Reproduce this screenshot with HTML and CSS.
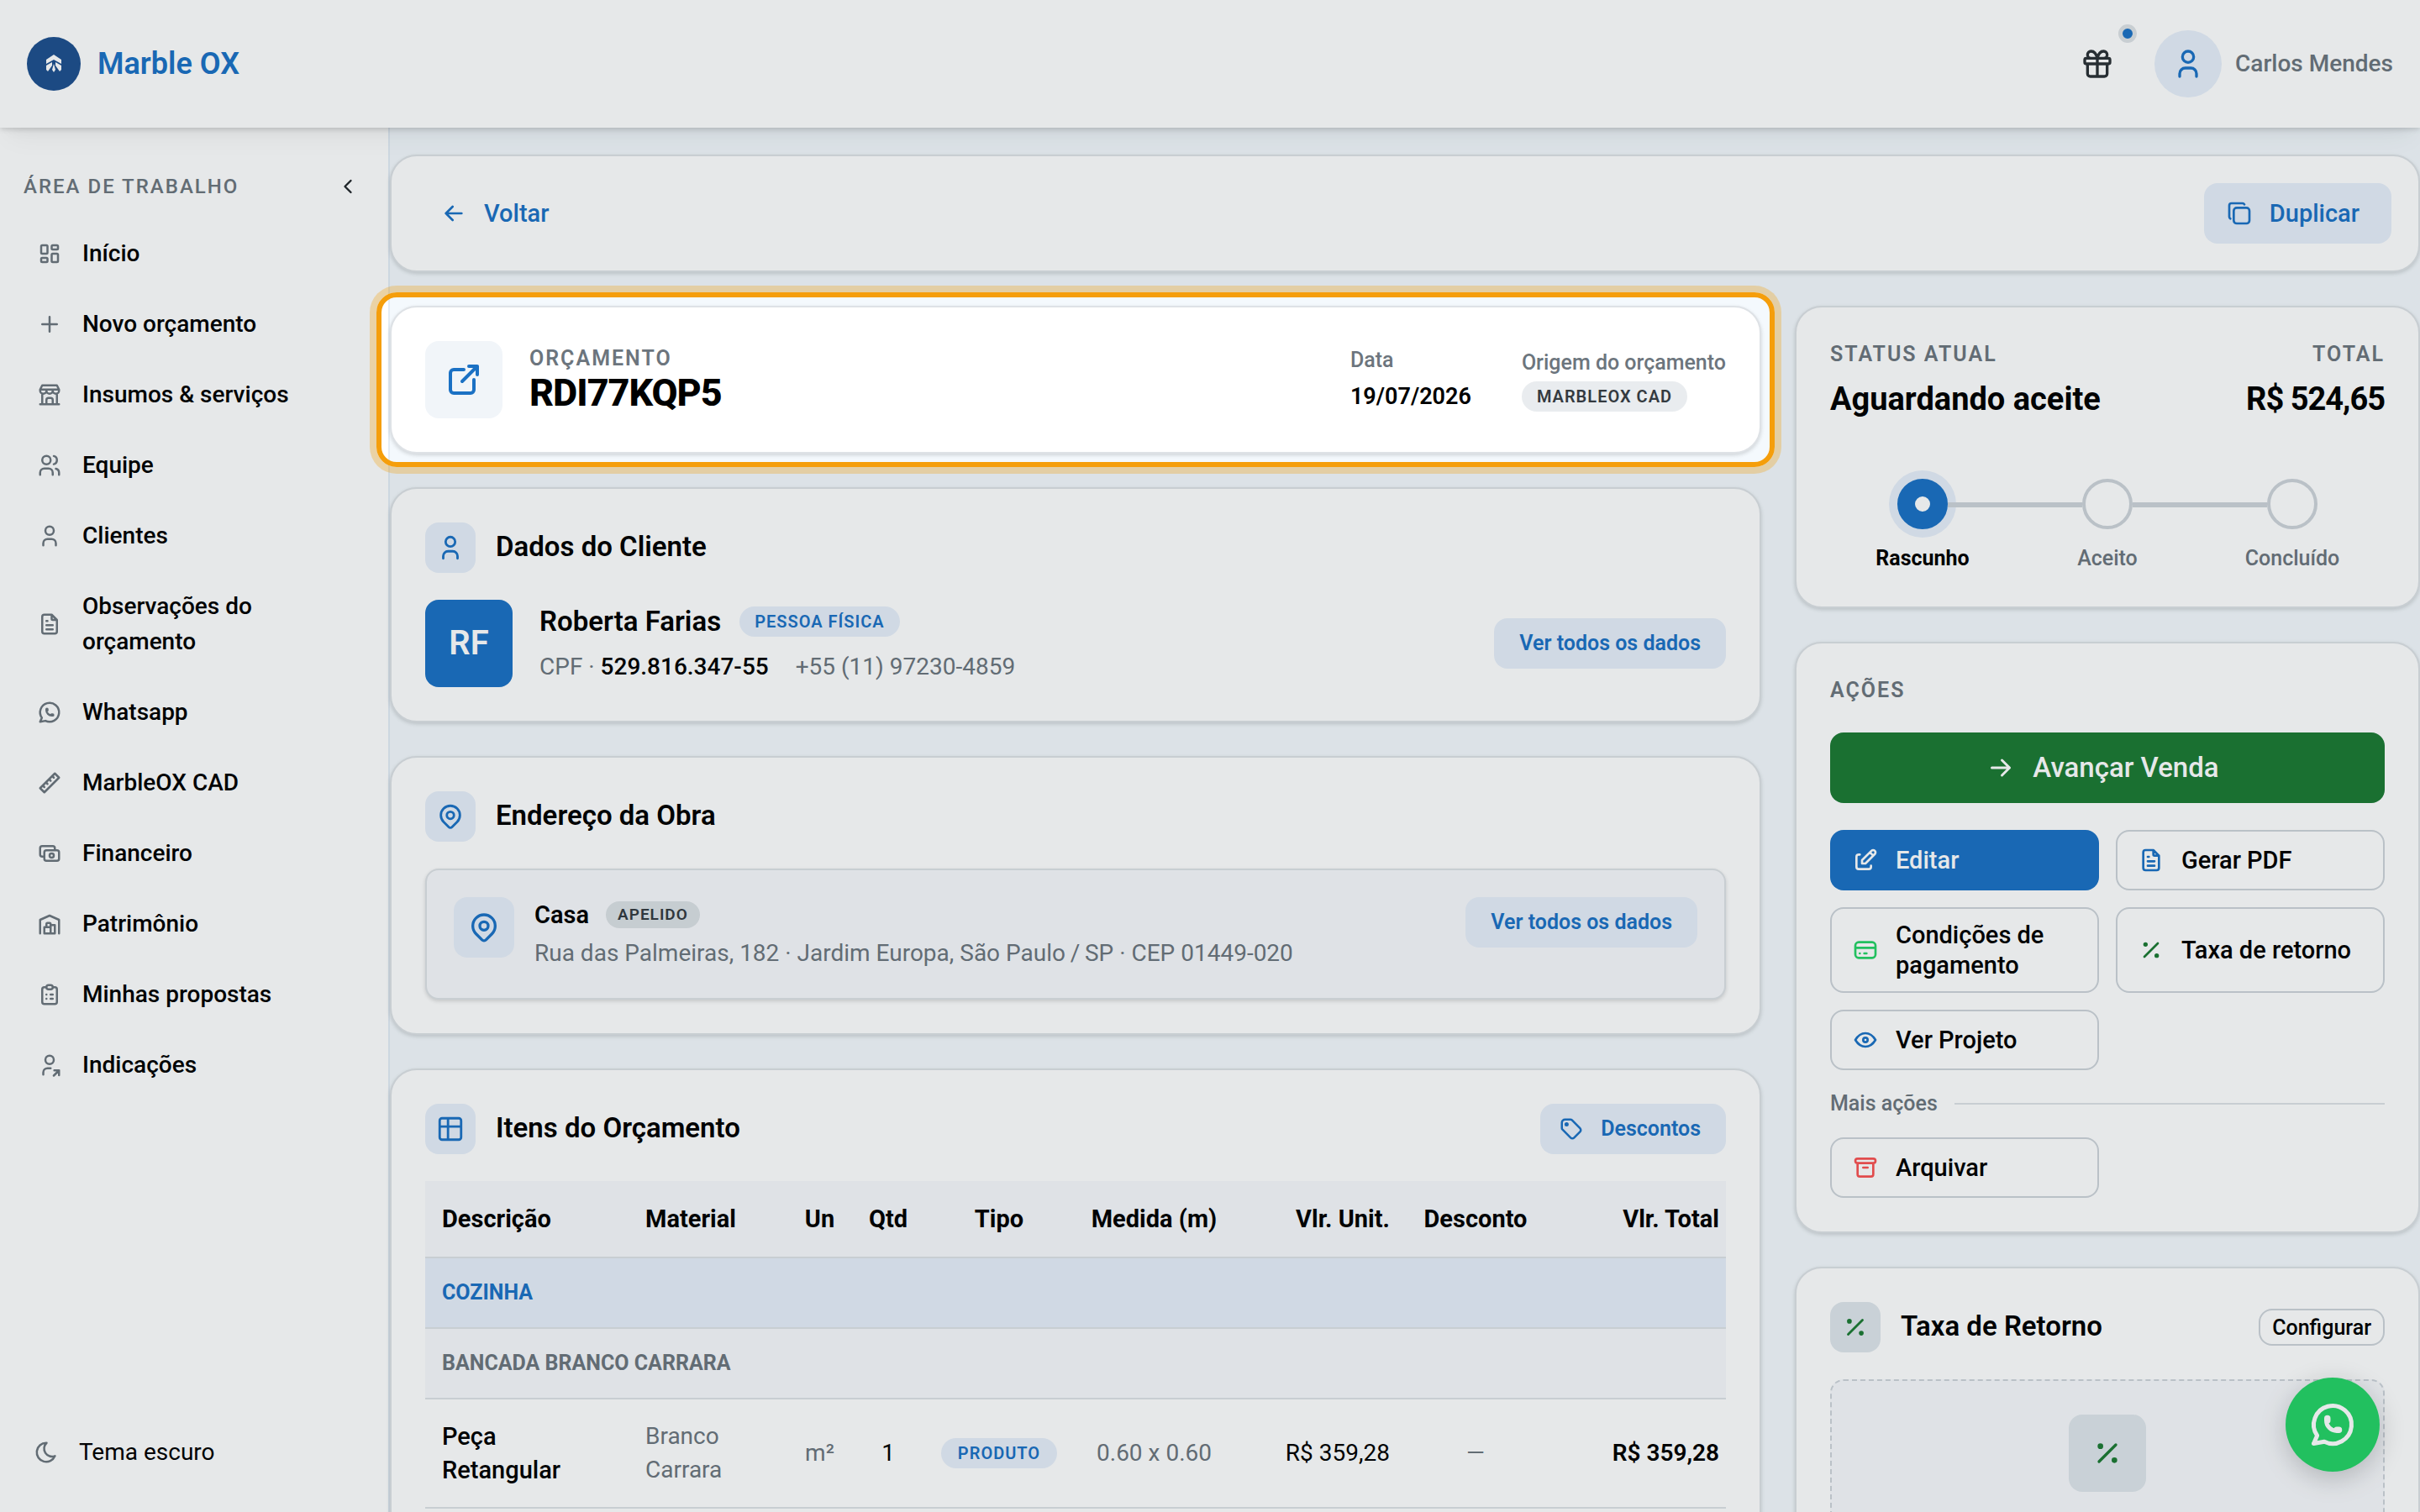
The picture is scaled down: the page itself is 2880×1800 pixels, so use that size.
FILE: index.html
```html
<!doctype html>
<html lang="pt-BR">
  <head>
    <meta charset="UTF-8" />
    <meta name="viewport" content="width=device-width, initial-scale=1.0" />
    <title>Marble OX</title>
    <link rel="stylesheet" href="styles.css">
  </head>
  <body>
    <svg class="sprite" aria-hidden="true">
      <symbol id="i-dashboard" viewBox="0 0 24 24"><path d="M5 4h4a1 1 0 0 1 1 1v6a1 1 0 0 1 -1 1h-4a1 1 0 0 1 -1 -1v-6a1 1 0 0 1 1 -1M5 16h4a1 1 0 0 1 1 1v2a1 1 0 0 1 -1 1h-4a1 1 0 0 1 -1 -1v-2a1 1 0 0 1 1 -1M15 12h4a1 1 0 0 1 1 1v6a1 1 0 0 1 -1 1h-4a1 1 0 0 1 -1 -1v-6a1 1 0 0 1 1 -1M15 4h4a1 1 0 0 1 1 1v2a1 1 0 0 1 -1 1h-4a1 1 0 0 1 -1 -1v-2a1 1 0 0 1 1 -1" /></symbol>
      <symbol id="i-plus" viewBox="0 0 24 24"><path d="M12 5v14M5 12h14" /></symbol>
      <symbol id="i-store" viewBox="0 0 24 24"><path d="M3 21h18M3 7v1a3 3 0 0 0 6 0v-1m0 1a3 3 0 0 0 6 0v-1m0 1a3 3 0 0 0 6 0v-1h-18l2 -4h14l2 4M5 21v-10.15M19 21v-10.15M9 21v-4a2 2 0 0 1 2 -2h2a2 2 0 0 1 2 2v4" /></symbol>
      <symbol id="i-users" viewBox="0 0 24 24"><path d="M5 7a4 4 0 1 0 8 0a4 4 0 1 0 -8 0M3 21v-2a4 4 0 0 1 4 -4h4a4 4 0 0 1 4 4v2M16 3.13a4 4 0 0 1 0 7.75M21 21v-2a4 4 0 0 0 -3 -3.85" /></symbol>
      <symbol id="i-user" viewBox="0 0 24 24"><path d="M8 7a4 4 0 1 0 8 0a4 4 0 0 0 -8 0M6 21v-2a4 4 0 0 1 4 -4h4a4 4 0 0 1 4 4v2" /></symbol>
      <symbol id="i-file" viewBox="0 0 24 24"><path d="M14 3v4a1 1 0 0 0 1 1h4M17 21h-10a2 2 0 0 1 -2 -2v-14a2 2 0 0 1 2 -2h7l5 5v11a2 2 0 0 1 -2 2M9 9h1M9 13h6M9 17h6" /></symbol>
      <symbol id="i-whatsapp" viewBox="0 0 24 24"><path d="M3 21l1.65 -3.8a9 9 0 1 1 3.4 2.9l-5.05 .9M9 10a.5 .5 0 0 0 1 0v-1a.5 .5 0 0 0 -1 0v1a5 5 0 0 0 5 5h1a.5 .5 0 0 0 0 -1h-1a.5 .5 0 0 0 0 1" /></symbol>
      <symbol id="i-ruler" viewBox="0 0 24 24"><path d="M17 3l4 4l-14 14l-4 -4zM16 7l-1.5 -1.5M13 10l-1.5 -1.5M10 13l-1.5 -1.5M7 16l-1.5 -1.5" /></symbol>
      <symbol id="i-cash" viewBox="0 0 24 24"><path d="M7 11a2 2 0 0 1 2 -2h10a2 2 0 0 1 2 2v6a2 2 0 0 1 -2 2h-10a2 2 0 0 1 -2 -2zM12 14a2 2 0 1 0 4 0a2 2 0 1 0 -4 0M17 9v-2a2 2 0 0 0 -2 -2h-10a2 2 0 0 0 -2 2v6a2 2 0 0 0 2 2h2" /></symbol>
      <symbol id="i-warehouse" viewBox="0 0 24 24"><path d="M3 21v-13l9 -4l9 4v13M13 13h4v8h-10v-6h6M13 21v-9a1 1 0 0 0 -1 -1h-2a1 1 0 0 0 -1 1v3" /></symbol>
      <symbol id="i-clipboard" viewBox="0 0 24 24"><path d="M9 5h-2a2 2 0 0 0 -2 2v12a2 2 0 0 0 2 2h10a2 2 0 0 0 2 -2v-12a2 2 0 0 0 -2 -2h-2M9 5a2 2 0 0 1 2 -2h2a2 2 0 0 1 2 2a2 2 0 0 1 -2 2h-2a2 2 0 0 1 -2 -2zM9 12h.01M13 12h2M9 16h.01M13 16h2" /></symbol>
      <symbol id="i-user-share" viewBox="0 0 24 24"><path d="M8 7a4 4 0 1 0 8 0a4 4 0 0 0 -8 0M6 21v-2a4 4 0 0 1 4 -4h3M16 22l5 -5M21 21.5v-4.5h-4.5" /></symbol>
      <symbol id="i-moon" viewBox="0 0 24 24"><path d="M12 3c.132 0 .263 0 .393 0a7.5 7.5 0 0 0 7.92 12.446a9 9 0 1 1 -8.313 -12.454z" /></symbol>
      <symbol id="i-chevron" viewBox="0 0 24 24"><path d="M15 6l-6 6l6 6" /></symbol>
      <symbol id="i-copy" viewBox="0 0 24 24"><path d="M7 9.667a2.667 2.667 0 0 1 2.667 -2.667h8.666a2.667 2.667 0 0 1 2.667 2.667v8.666a2.667 2.667 0 0 1 -2.667 2.667h-8.666a2.667 2.667 0 0 1 -2.667 -2.667zM4.012 16.737a2.005 2.005 0 0 1 -1.012 -1.737v-10c0 -1.1 .9 -2 2 -2h10c.75 0 1.158 .385 1.5 1" /></symbol>
      <symbol id="i-external" viewBox="0 0 24 24"><path d="M12 6h-6a2 2 0 0 0 -2 2v10a2 2 0 0 0 2 2h10a2 2 0 0 0 2 -2v-6M11 13l9 -9M15 4h5v5" /></symbol>
      <symbol id="i-pin" viewBox="0 0 24 24"><path d="M9 11a3 3 0 1 0 6 0a3 3 0 0 0 -6 0M17.657 16.657l-4.243 4.243a2 2 0 0 1 -2.827 0l-4.244 -4.243a8 8 0 1 1 11.314 0z" /></symbol>
      <symbol id="i-table" viewBox="0 0 24 24"><path d="M3 5a2 2 0 0 1 2 -2h14a2 2 0 0 1 2 2v14a2 2 0 0 1 -2 2h-14a2 2 0 0 1 -2 -2v-14zM3 10h18M10 3v18" /></symbol>
      <symbol id="i-tag" viewBox="0 0 24 24"><path d="M6.5 7.5a1 1 0 1 0 2 0a1 1 0 1 0 -2 0M3 6v5.172a2 2 0 0 0 .586 1.414l7.71 7.71a2.41 2.41 0 0 0 3.408 0l5.592 -5.592a2.41 2.41 0 0 0 0 -3.408l-7.71 -7.71a2 2 0 0 0 -1.414 -.586h-5.172a3 3 0 0 0 -3 3z" /></symbol>
      <symbol id="i-edit" viewBox="0 0 24 24"><path d="M7 7h-1a2 2 0 0 0 -2 2v9a2 2 0 0 0 2 2h9a2 2 0 0 0 2 -2v-1M20.385 6.585a2.1 2.1 0 0 0 -2.97 -2.97l-8.415 8.385v3h3l8.385 -8.415zM16 5l3 3" /></symbol>
      <symbol id="i-card" viewBox="0 0 24 24"><path d="M3 8a3 3 0 0 1 3 -3h12a3 3 0 0 1 3 3v8a3 3 0 0 1 -3 3h-12a3 3 0 0 1 -3 -3zM3 10h18M7 15h.01M11 15h2" /></symbol>
      <symbol id="i-eye" viewBox="0 0 24 24"><path d="M10 12a2 2 0 1 0 4 0a2 2 0 0 0 -4 0M21 12c-2.4 4 -5.4 6 -9 6c-3.6 0 -6.6 -2 -9 -6c2.4 -4 5.4 -6 9 -6c3.6 0 6.6 2 9 6" /></symbol>
      <symbol id="i-archive" viewBox="0 0 24 24"><path d="M3 6a2 2 0 0 1 2 -2h14a2 2 0 0 1 2 2a2 2 0 0 1 -2 2h-14a2 2 0 0 1 -2 -2zM5 8v10a2 2 0 0 0 2 2h10a2 2 0 0 0 2 -2v-10M10 12h4" /></symbol>
      <symbol id="i-gift" viewBox="0 0 24 24"><path d="M3 9a1 1 0 0 1 1 -1h16a1 1 0 0 1 1 1v2a1 1 0 0 1 -1 1h-16a1 1 0 0 1 -1 -1zM12 8v13M19 12v7a2 2 0 0 1 -2 2h-10a2 2 0 0 1 -2 -2v-7M7.5 8a2.5 2.5 0 0 1 0 -5a4.8 8 0 0 1 4.5 5a4.8 8 0 0 1 4.5 -5a2.5 2.5 0 0 1 0 5" /></symbol>
      <symbol id="i-percent" viewBox="0 0 24 24"><path d="M16 17a1 1 0 1 0 2 0a1 1 0 1 0 -2 0M6 7a1 1 0 1 0 2 0a1 1 0 1 0 -2 0M6 18l12 -12" /></symbol>
      <symbol id="i-arrow-left" viewBox="0 0 24 24"><path d="M5 12h14M5 12l6 6M5 12l6 -6" /></symbol>
      <symbol id="i-arrow-right" viewBox="0 0 24 24"><path d="M5 12h14M13 18l6 -6M13 6l6 6" /></symbol>
    </svg>

    <header class="topbar">
      <a href="#" class="brand">
        <svg class="brand-logo" viewBox="0 0 64 64" aria-hidden="true">
          <circle cx="32" cy="32" r="32" />
          <path d="M32 21l9 6v5l-9 -5l-9 5v-5z" />
          <path d="M23 34l7 -4v4l-5 7l-2 -2zM41 34l-7 -4v4l5 7l2 -2z" />
          <path d="M32 32l2 7l-2 3l-2 -3z" />
        </svg>
        <span>Marble OX</span>
      </a>
      <div class="topbar-right">
        <button type="button" class="gift-btn" aria-label="Novidades">
          <svg class="icon icon-40"><use href="#i-gift" /></svg>
          <span class="dot"></span>
        </button>
        <a href="#" class="profile">
          <span class="avatar-circle"><svg class="icon icon-40"><use href="#i-user" /></svg></span>
          <span>Carlos Mendes</span>
        </a>
      </div>
    </header>

    <div class="layout">
      <aside class="sidebar">
        <div class="sidebar-head">
          <span class="sidebar-title">Área de trabalho</span>
          <button type="button" class="collapse-btn" aria-label="Recolher menu">
            <svg class="icon icon-28"><use href="#i-chevron" /></svg>
          </button>
        </div>
        <nav class="nav">
          <a href="#"><svg class="icon icon-30"><use href="#i-dashboard" /></svg><span>Início</span></a>
          <a href="#"><svg class="icon icon-30"><use href="#i-plus" /></svg><span>Novo orçamento</span></a>
          <a href="#"><svg class="icon icon-30"><use href="#i-store" /></svg><span>Insumos &amp; serviços</span></a>
          <a href="#"><svg class="icon icon-30"><use href="#i-users" /></svg><span>Equipe</span></a>
          <a href="#"><svg class="icon icon-30"><use href="#i-user" /></svg><span>Clientes</span></a>
          <a href="#"><svg class="icon icon-30"><use href="#i-file" /></svg><span>Observações do orçamento</span></a>
          <a href="#"><svg class="icon icon-30"><use href="#i-whatsapp" /></svg><span>Whatsapp</span></a>
          <a href="#"><svg class="icon icon-30"><use href="#i-ruler" /></svg><span>MarbleOX CAD</span></a>
          <a href="#"><svg class="icon icon-30"><use href="#i-cash" /></svg><span>Financeiro</span></a>
          <a href="#"><svg class="icon icon-30"><use href="#i-warehouse" /></svg><span>Patrimônio</span></a>
          <a href="#"><svg class="icon icon-30"><use href="#i-clipboard" /></svg><span>Minhas propostas</span></a>
          <a href="#"><svg class="icon icon-30"><use href="#i-user-share" /></svg><span>Indicações</span></a>
        </nav>
        <button type="button" class="theme-btn">
          <svg class="icon icon-30"><use href="#i-moon" /></svg>
          <span>Tema escuro</span>
        </button>
      </aside>

      <main class="main">
        <div class="card toolbar">
          <button type="button" class="btn btn-subtle">
            <svg class="icon icon-32"><use href="#i-arrow-left" /></svg>Voltar
          </button>
          <button type="button" class="btn btn-light">
            <svg class="icon icon-32"><use href="#i-copy" /></svg>Duplicar
          </button>
        </div>

        <div class="columns">
          <div class="column">
            <section class="card quote spotlight">
              <span class="tile tile-lg"><svg class="icon icon-48"><use href="#i-external" /></svg></span>
              <div class="quote-id">
                <span class="overline">Orçamento</span>
                <h1>RDI77KQP5</h1>
              </div>
              <div class="quote-meta">
                <span class="meta-label">Data</span>
                <strong class="meta-value">19/07/2026</strong>
              </div>
              <div class="quote-meta">
                <span class="meta-label">Origem do orçamento</span>
                <span class="badge badge-gray">MarbleOX CAD</span>
              </div>
            </section>

            <section class="card">
              <div class="card-head">
                <span class="tile"><svg class="icon icon-34"><use href="#i-user" /></svg></span>
                <h2>Dados do Cliente</h2>
              </div>
              <div class="client">
                <span class="initials">RF</span>
                <div class="client-info">
                  <div class="client-name">
                    <strong>Roberta Farias</strong>
                    <span class="badge">Pessoa física</span>
                  </div>
                  <div class="client-docs">
                    <span>CPF · <b>529.816.347-55</b></span>
                    <span>+55 (11) 97230-4859</span>
                  </div>
                </div>
                <button type="button" class="btn btn-light btn-sm">Ver todos os dados</button>
              </div>
            </section>

            <section class="card">
              <div class="card-head">
                <span class="tile"><svg class="icon icon-34"><use href="#i-pin" /></svg></span>
                <h2>Endereço da Obra</h2>
              </div>
              <div class="address">
                <span class="tile tile-md"><svg class="icon icon-40"><use href="#i-pin" /></svg></span>
                <div class="address-info">
                  <div class="address-name">
                    <strong>Casa</strong>
                    <span class="badge badge-sm">Apelido</span>
                  </div>
                  <p>Rua das Palmeiras, 182 · Jardim Europa, São Paulo&thinsp;/&thinsp;SP · CEP 01449-020</p>
                </div>
                <button type="button" class="btn btn-light btn-sm">Ver todos os dados</button>
              </div>
            </section>

            <section class="card">
              <div class="card-head">
                <span class="tile"><svg class="icon icon-34"><use href="#i-table" /></svg></span>
                <h2>Itens do Orçamento</h2>
                <button type="button" class="btn btn-light btn-sm btn-icon">
                  <svg class="icon icon-30"><use href="#i-tag" /></svg>Descontos
                </button>
              </div>
              <table class="items">
                <colgroup>
                  <col>
                  <col class="col-material">
                  <col class="col-un">
                  <col class="col-qtd">
                  <col class="col-tipo">
                  <col class="col-medida">
                  <col class="col-unit">
                  <col class="col-desconto">
                  <col class="col-total">
                </colgroup>
                <thead>
                  <tr>
                    <th>Descrição</th>
                    <th>Material</th>
                    <th class="center">Un</th>
                    <th class="center">Qtd</th>
                    <th class="center">Tipo</th>
                    <th class="center">Medida (m)</th>
                    <th class="right">Vlr. Unit.</th>
                    <th class="center">Desconto</th>
                    <th class="right">Vlr. Total</th>
                  </tr>
                </thead>
                <tbody>
                  <tr class="row-room">
                    <td colspan="9">COZINHA</td>
                  </tr>
                  <tr class="row-group">
                    <td colspan="9">BANCADA BRANCO CARRARA</td>
                  </tr>
                  <tr>
                    <td class="name">Peça Retangular</td>
                    <td class="muted">Branco Carrara</td>
                    <td class="muted center">m²</td>
                    <td class="center">1</td>
                    <td class="center"><span class="badge">Produto</span></td>
                    <td class="muted center">0.60 x 0.60</td>
                    <td class="right">R$ 359,28</td>
                    <td class="muted center">—</td>
                    <td class="right strong">R$ 359,28</td>
                  </tr>
                </tbody>
              </table>
            </section>
          </div>

          <div class="column">
            <section class="card">
              <div class="status-row">
                <span class="overline">Status atual</span>
                <span class="overline">Total</span>
              </div>
              <div class="status-row status-values">
                <strong>Aguardando aceite</strong>
                <strong class="total">R$ 524,65</strong>
              </div>
              <ol class="stepper">
                <li class="active"><span class="step-mark"></span>Rascunho</li>
                <li><span class="step-mark"></span>Aceito</li>
                <li><span class="step-mark"></span>Concluído</li>
              </ol>
            </section>

            <section class="card">
              <h3 class="overline">Ações</h3>
              <button type="button" class="btn btn-advance">
                <svg class="icon icon-36"><use href="#i-arrow-right" /></svg>Avançar Venda
              </button>
              <div class="actions">
                <button type="button" class="btn btn-primary"><svg class="icon icon-32"><use href="#i-edit" /></svg>Editar</button>
                <button type="button" class="btn btn-outline"><svg class="icon icon-32 blue"><use href="#i-file" /></svg>Gerar PDF</button>
                <button type="button" class="btn btn-outline"><svg class="icon icon-32 green"><use href="#i-card" /></svg>Condições de pagamento</button>
                <button type="button" class="btn btn-outline"><svg class="icon icon-32 dark-green"><use href="#i-percent" /></svg>Taxa de retorno</button>
                <button type="button" class="btn btn-outline"><svg class="icon icon-32 blue"><use href="#i-eye" /></svg>Ver Projeto</button>
              </div>
              <div class="divider">Mais ações</div>
              <div class="actions">
                <button type="button" class="btn btn-outline"><svg class="icon icon-32 red"><use href="#i-archive" /></svg>Arquivar</button>
              </div>
            </section>

            <section class="card">
              <div class="card-head">
                <span class="tile tile-gray"><svg class="icon icon-34"><use href="#i-percent" /></svg></span>
                <h2>Taxa de Retorno</h2>
                <button type="button" class="btn-config">Configurar</button>
              </div>
              <div class="empty">
                <span class="tile tile-lg tile-gray"><svg class="icon icon-40"><use href="#i-percent" /></svg></span>
              </div>
            </section>
          </div>
        </div>
      </main>
    </div>

    <a href="#" class="fab" aria-label="WhatsApp">
      <svg class="icon icon-60"><use href="#i-whatsapp" /></svg>
    </a>
  </body>
</html>
```
FILE: styles.css
```css
:root {
  --blue: #1b71c4;
  --blue-light: #e7effa;
  --green: #1c7a33;
  --muted: #6c757d;
  --border: #dee2e6;
  --border-strong: #ced4da;
  --surface: #f8f9fc;
  --shadow-xs: 0 2px 6px rgba(0, 0, 0, 0.05), 0 2px 4px rgba(0, 0, 0, 0.1);
}

* {
  margin: 0;
  padding: 0;
  box-sizing: border-box;
}

body {
  font-family: Roboto, "Open Sans", sans-serif;
  font-size: 28px;
  line-height: 42px;
  color: #000;
  background: #f4f9fd;
  height: 100vh;
  overflow: hidden;
  display: flex;
  flex-direction: column;
}

a {
  color: inherit;
  text-decoration: none;
}

button {
  font-family: inherit;
  font-size: 28px;
  color: inherit;
  background: none;
  border: none;
  cursor: pointer;
}

.sprite {
  display: none;
}

/* icons */
.icon {
  flex-shrink: 0;
  display: block;
  fill: none;
  stroke: currentColor;
  stroke-width: 2;
  stroke-linecap: round;
  stroke-linejoin: round;
}

.icon-28 { width: 28px; height: 28px; }
.icon-30 { width: 30px; height: 30px; }
.icon-32 { width: 32px; height: 32px; }
.icon-34 { width: 34px; height: 34px; }
.icon-36 { width: 36px; height: 36px; }
.icon-40 { width: 40px; height: 40px; }
.icon-48 { width: 48px; height: 48px; }
.icon-60 { width: 60px; height: 60px; }

.blue { color: var(--blue); }
.green { color: #25d366; }
.dark-green { color: var(--green); }
.red { color: #fa5252; }

.overline {
  font-size: 25px;
  line-height: 32px;
  font-weight: 600;
  letter-spacing: 2px;
  text-transform: uppercase;
  color: var(--muted);
}

/* top bar */
.topbar {
  position: relative;
  z-index: 10;
  flex-shrink: 0;
  display: flex;
  align-items: center;
  justify-content: space-between;
  height: 152px;
  padding: 0 32px;
  background: #fff;
  box-shadow:
    0 2px 6px rgba(0, 0, 0, 0.15),
    0 20px 30px -10px rgba(0, 0, 0, 0.05),
    0 14px 14px -10px rgba(0, 0, 0, 0.04);
}

.brand {
  display: flex;
  align-items: center;
  gap: 20px;
  font-size: 36px;
  font-weight: 600;
  color: var(--blue);
}

.brand-logo {
  width: 64px;
  height: 64px;
  fill: #fff;
}

.brand-logo circle {
  fill: #1f508e;
}

.topbar-right {
  display: flex;
  align-items: center;
  gap: 28px;
}

.gift-btn {
  position: relative;
  display: flex;
  align-items: center;
  justify-content: center;
  width: 80px;
  height: 80px;
  color: #2b3035;
}

.dot {
  position: absolute;
  top: -7px;
  right: -7px;
  width: 22px;
  height: 22px;
  border: 5px solid var(--border);
  border-radius: 50%;
  background: var(--blue);
}

.profile {
  display: flex;
  align-items: center;
  gap: 16px;
  font-weight: 500;
  color: var(--muted);
}

.avatar-circle {
  display: flex;
  align-items: center;
  justify-content: center;
  width: 80px;
  height: 80px;
  border-radius: 50%;
  background: var(--blue-light);
  color: var(--blue);
}

/* sidebar */
.layout {
  flex: 1;
  min-height: 0;
  display: flex;
}

.sidebar {
  flex-shrink: 0;
  display: flex;
  flex-direction: column;
  width: 464px;
  padding: 50px 0;
  background: #fff;
  border-right: 2px solid #e3ecf5;
}

.sidebar-head {
  display: flex;
  align-items: center;
  justify-content: space-between;
  height: 40px;
  padding: 0 34px 0 28px;
  margin-bottom: 18px;
}

.sidebar-title {
  font-size: 24px;
  font-weight: 500;
  letter-spacing: 2px;
  text-transform: uppercase;
  color: var(--muted);
}

.collapse-btn {
  display: flex;
  align-items: center;
  color: #212529;
}

.nav {
  flex: 1;
  padding-right: 96px;
}

.nav a {
  display: flex;
  align-items: center;
  gap: 24px;
  padding: 21px 0 21px 44px;
  font-weight: 500;
}

.nav .icon,
.theme-btn .icon {
  color: var(--muted);
}

.theme-btn {
  display: flex;
  align-items: center;
  gap: 24px;
  padding-left: 40px;
  line-height: 42px;
}

/* cards */
.main {
  flex: 1;
  min-width: 0;
  padding-top: 32px;
}

.card {
  position: relative;
  padding: 40px;
  background: #fff;
  border: 2px solid var(--border);
  border-radius: 32px;
  box-shadow: var(--shadow-xs);
}

.toolbar {
  display: flex;
  justify-content: space-between;
  padding: 32px;
}

.columns {
  display: grid;
  grid-template-columns: minmax(0, 1fr) 744px;
  gap: 40px;
  padding-top: 40px;
}

.column {
  display: flex;
  flex-direction: column;
  gap: 40px;
}

.card-head {
  display: flex;
  align-items: center;
  gap: 24px;
  height: 60px;
  margin-bottom: 32px;
}

.card-head h2 {
  flex: 1;
  padding-bottom: 2px;
  font-size: 33px;
  font-weight: 600;
}

.tile {
  flex-shrink: 0;
  display: flex;
  align-items: center;
  justify-content: center;
  width: 60px;
  height: 60px;
  border-radius: 16px;
  background: var(--blue-light);
  color: var(--blue);
}

.tile-md {
  width: 72px;
  height: 72px;
}

.tile-lg {
  width: 92px;
  height: 92px;
}

.tile-gray {
  background: #dfe6eb;
  color: var(--green);
}

.badge {
  display: inline-block;
  height: 36px;
  padding: 0 18px;
  border-radius: 18px;
  font-size: 20px;
  line-height: 36px;
  font-weight: 600;
  letter-spacing: 1px;
  text-transform: uppercase;
  white-space: nowrap;
  background: var(--blue-light);
  color: var(--blue);
}

.badge-gray {
  background: #e9ecef;
  color: #343a40;
}

.badge-sm {
  height: 32px;
  padding: 0 14px;
  font-size: 19px;
  line-height: 32px;
  background: #dce1e5;
  color: #343a40;
}

/* buttons */
.btn {
  display: flex;
  align-items: center;
  gap: 20px;
  min-height: 72px;
  padding: 13px 36px 13px 24px;
  border: 2px solid transparent;
  border-radius: 16px;
  font-size: 29px;
  line-height: 36px;
  font-weight: 500;
  text-align: left;
}

.btn-subtle {
  color: var(--blue);
}

.btn-light {
  background: var(--blue-light);
  color: var(--blue);
}

.btn-sm {
  min-height: 60px;
  padding: 0 28px;
  font-size: 25px;
  font-weight: 600;
}

.btn-icon {
  padding-left: 20px;
}

.btn-primary {
  background: var(--blue);
  color: #fff;
}

.btn-outline {
  padding-right: 24px;
  border-color: var(--border-strong);
}

.btn-advance {
  justify-content: center;
  width: 100%;
  min-height: 84px;
  margin: 34px 0 32px;
  background: var(--green);
  color: #fff;
  font-size: 33px;
}

.btn-config {
  height: 44px;
  padding: 0 14px;
  border: 2px solid var(--border-strong);
  border-radius: 16px;
  font-size: 25px;
  font-weight: 500;
}

/* quote summary */
.quote {
  display: flex;
  align-items: center;
}

.quote .tile {
  background: #f1f5f9;
}

.quote-id {
  flex: 1;
  display: flex;
  flex-direction: column;
  padding-left: 32px;
}

.quote-id h1 {
  font-size: 45px;
  line-height: 50px;
  font-weight: 800;
  letter-spacing: -1px;
}

.quote-meta {
  display: flex;
  flex-direction: column;
  align-items: flex-start;
  gap: 4px;
  margin-left: 60px;
}

.meta-label {
  font-size: 25px;
  line-height: 36px;
  font-weight: 500;
  color: var(--muted);
}

.meta-value {
  font-size: 27px;
  font-weight: 600;
}

/* tour step: ring round the card, everything else dimmed */
.spotlight::after {
  content: "";
  position: absolute;
  inset: -18px;
  z-index: 100;
  border: 6px solid #f59e0b;
  border-radius: 24px;
  box-shadow:
    0 0 0 8px rgba(245, 158, 11, 0.3),
    0 0 0 4000px rgba(8, 25, 42, 0.1);
  pointer-events: none;
}

/* client */
.client {
  display: flex;
  align-items: center;
  gap: 32px;
}

.initials {
  display: flex;
  align-items: center;
  justify-content: center;
  width: 104px;
  height: 104px;
  border-radius: 16px;
  background: var(--blue);
  color: #fff;
  font-size: 40px;
  font-weight: 600;
}

.client-info {
  flex: 1;
  padding-top: 2px;
}

.client-name {
  display: flex;
  align-items: center;
  gap: 22px;
  margin-bottom: 12px;
  font-size: 33px;
}

.client-name strong,
.address-name strong {
  font-weight: 600;
}

.client-docs {
  display: flex;
  gap: 32px;
  color: var(--muted);
}

.client-docs b {
  font-weight: 500;
  color: #000;
}

/* address */
.address {
  display: flex;
  align-items: flex-start;
  gap: 24px;
  padding: 32px;
  background: var(--surface);
  border: 2px solid var(--border);
  border-radius: 16px;
  box-shadow: var(--shadow-xs);
}

.address-info {
  flex: 1;
}

.address-name {
  display: flex;
  align-items: center;
  gap: 20px;
  margin-bottom: 4px;
}

.address-name strong {
  font-size: 29px;
}

.address-info p {
  color: var(--muted);
}

/* items table */
.items {
  width: 100%;
  table-layout: fixed;
  border-collapse: collapse;
}

.col-material { width: 189px; }
.col-un { width: 77px; }
.col-qtd { width: 86px; }
.col-tipo { width: 178px; }
.col-medida { width: 191px; }
.col-unit { width: 205px; }
.col-desconto { width: 164px; }
.col-total { width: 216px; }

.items th,
.items td {
  padding: 24px 20px;
  border-bottom: 2px solid var(--border);
  line-height: 40px;
  text-align: left;
  font-weight: 400;
}

.items th {
  font-size: 29px;
  font-weight: 700;
  line-height: 42px;
  background: var(--surface);
  white-space: nowrap;
}

.items th:last-child,
.items td:last-child {
  padding-right: 8px;
}

.items .center {
  text-align: center;
}

.items .right {
  text-align: right;
}

/* short columns: the heading is as wide as the text box */
.items th.center {
  padding-left: 0;
  padding-right: 0;
}

.items .badge {
  display: block;
}

.items .muted {
  color: var(--muted);
}

.items .name {
  font-size: 29px;
  font-weight: 500;
}

.items .strong {
  font-weight: 600;
}

.items .row-room td,
.items .row-group td {
  font-size: 25px;
  line-height: 34px;
  font-weight: 700;
}

.items .row-room td {
  background: var(--blue-light);
  color: var(--blue);
}

.items .row-group td {
  background: var(--surface);
  color: var(--muted);
}

/* status */
.status-row {
  display: flex;
  justify-content: space-between;
}

.status-values {
  margin-top: 10px;
  font-size: 38px;
  line-height: 54px;
}

.status-values strong {
  font-weight: 700;
}

.status-values .total {
  letter-spacing: -1px;
}

.stepper {
  display: flex;
  margin-top: 68px;
  list-style: none;
}

.stepper li {
  position: relative;
  flex: 1;
  display: flex;
  flex-direction: column;
  align-items: center;
  gap: 18px;
  font-size: 25px;
  line-height: 34px;
  font-weight: 500;
  color: var(--muted);
}

.stepper li + li::before {
  content: "";
  position: absolute;
  top: 28px;
  right: calc(50% + 30px);
  width: calc(100% - 60px);
  height: 6px;
  background: var(--border-strong);
}

.step-mark {
  width: 60px;
  height: 60px;
  border: 4px solid var(--border-strong);
  border-radius: 50%;
}

.stepper .active {
  color: #000;
  font-weight: 700;
}

.active .step-mark {
  border: 21px solid var(--blue);
  background: #fff;
  box-shadow: 0 0 0 10px var(--blue-light);
}

/* actions */
.actions {
  display: grid;
  grid-template-columns: 1fr 1fr;
  gap: 20px;
}

.divider {
  display: flex;
  align-items: center;
  gap: 20px;
  margin: 20px 0;
  font-size: 25px;
  line-height: 40px;
  font-weight: 500;
  color: var(--muted);
}

.divider::after {
  content: "";
  flex: 1;
  height: 2px;
  background: var(--border);
}

.empty {
  display: flex;
  justify-content: center;
  padding: 40px;
  background: var(--surface);
  border: 2px dashed var(--border-strong);
  border-radius: 16px;
}

.fab {
  position: fixed;
  right: 48px;
  bottom: 48px;
  z-index: 20;
  display: flex;
  align-items: center;
  justify-content: center;
  width: 112px;
  height: 112px;
  border-radius: 50%;
  background: #25d366;
  color: #fff;
  box-shadow: 0 8px 32px rgba(0, 0, 0, 0.2);
}
```
